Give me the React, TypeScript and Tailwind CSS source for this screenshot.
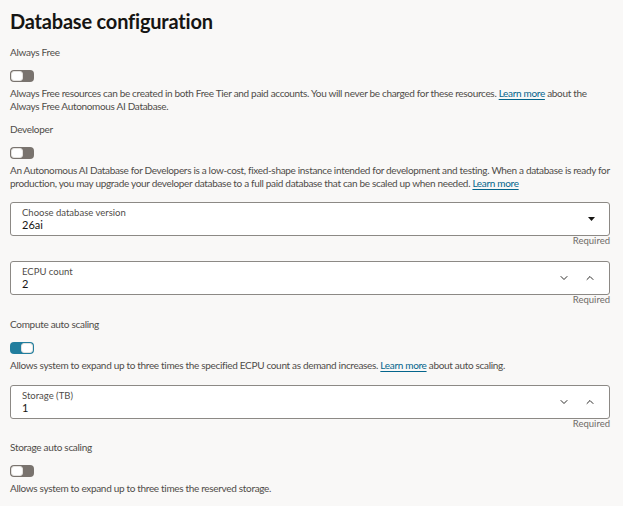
import { ChevronDown, ChevronUp } from "lucide-react";

function Toggle({ on = false }: { on?: boolean }) {
  return (
    <div
      className={
        on
          ? "flex h-[12px] w-[24px] items-center justify-end rounded-[4px] bg-[#227e9e] p-[1px]"
          : "flex h-[12px] w-[24px] items-center justify-start rounded-[4px] bg-[#79736e] p-[1px]"
      }
    >
      <div className="h-[10px] w-[12px] rounded-[3px] border border-[#e4e2df] bg-white" />
    </div>
  );
}

function LearnMore() {
  return (
    <a href="#" className="text-[#04658c] underline decoration-[#04658c] underline-offset-2">
      Learn more
    </a>
  );
}

function SwitchField({
  label,
  on,
  className,
  children,
}: {
  label: string;
  on?: boolean;
  className?: string;
  children: React.ReactNode;
}) {
  return (
    <div className={"flex flex-col " + (className ?? "")}>
      <div className="text-[10px] leading-[13px] tracking-[-0.3px] text-[#4f4c49]">{label}</div>
      <div className="mt-[11px]">
        <Toggle on={on} />
      </div>
      <p className="mt-[5px] text-[10px] leading-[13px] tracking-[-0.32px] text-[#4f4c49]">{children}</p>
    </div>
  );
}

function InputField({
  label,
  value,
  kind,
  className,
}: {
  label: string;
  value: string;
  kind: "select" | "number";
  className?: string;
}) {
  return (
    <div className={"flex flex-col " + (className ?? "")}>
      <div className="flex h-[34px] items-center rounded-[3px] border border-[#8c8985] bg-white pl-[11px] pr-[13px]">
        <div className="flex flex-1 flex-col pb-[1px]">
          <span className="text-[9.5px] leading-[11px] text-[#4f4c49]">{label}</span>
          <span className="text-[11px] leading-[13px] text-[#161513]">{value}</span>
        </div>
        {kind === "select" ? (
          <svg width="7" height="4" viewBox="0 0 7 4" className="mr-[1px]">
            <path d="M0 0h7L3.5 4z" fill="#161513" />
          </svg>
        ) : (
          <div className="flex items-center gap-[14px] text-[#161513]">
            <ChevronDown size={12} strokeWidth={1.8} />
            <ChevronUp size={12} strokeWidth={1.8} />
          </div>
        )}
      </div>
      <div className="text-right text-[9.5px] leading-[10px] text-[#6f6b67]">Required</div>
    </div>
  );
}

export default function App() {
  return (
    <div className="min-h-screen bg-[#f9f8f7] font-['Lato',sans-serif]">
      <div className="w-[620px] px-[10px] pt-[8px]">
        <h1 className="text-[20px] font-bold leading-[26px] tracking-[-0.2px] text-[#161513]">
          Database configuration
        </h1>

        <SwitchField label="Always Free" className="mt-[12px]">
          Always Free resources can be created in both Free Tier and paid accounts. You will never be charged for
          these resources. <LearnMore /> about the Always Free Autonomous AI Database.
        </SwitchField>

        <SwitchField label="Developer" className="mt-[10px]">
          An Autonomous AI Database for Developers is a low-cost, fixed-shape instance intended for development and
          testing. When a database is ready for production, you may upgrade your developer database to a full paid
          database that can be scaled up when needed. <LearnMore />
        </SwitchField>

        <InputField label="Choose database version" value="26ai" kind="select" className="mt-[12px]" />
        <InputField label="ECPU count" value="2" kind="number" className="mt-[15px]" />

        <SwitchField label="Compute auto scaling" on className="mt-[13px]">
          Allows system to expand up to three times the specified ECPU count as demand increases. <LearnMore /> about
          auto scaling.
        </SwitchField>

        <InputField label="Storage (TB)" value="1" kind="number" className="mt-[13px]" />

        <SwitchField label="Storage auto scaling" className="mt-[12px]">
          Allows system to expand up to three times the reserved storage.
        </SwitchField>
      </div>
    </div>
  );
}
